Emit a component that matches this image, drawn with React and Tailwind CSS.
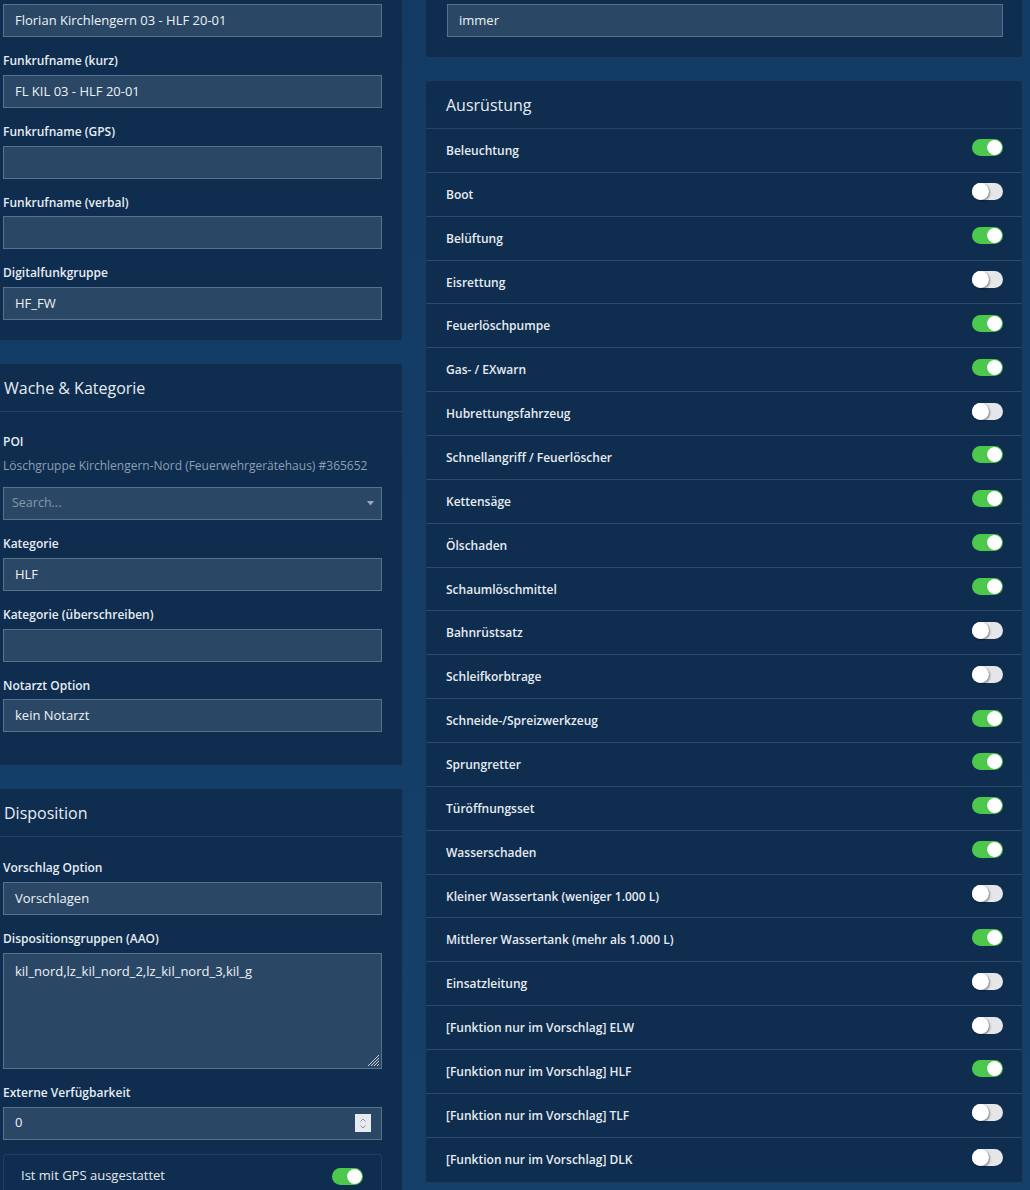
import React from "react";

function Toggle({ on }) {
  return on ? (
    <div className="relative h-[17px] w-[31px] shrink-0 rounded-full bg-[#4cc84c]">
      <div className="absolute right-[1px] top-[1px] h-[15px] w-[15px] rounded-full bg-white shadow-[0_0_1px_rgba(0,0,0,0.3)]" />
    </div>
  ) : (
    <div className="relative h-[17px] w-[31px] shrink-0 rounded-full bg-[#e4e6ea]">
      <div className="absolute left-0 top-0 h-[17px] w-[17px] rounded-full bg-white shadow-[1px_1px_2px_rgba(0,0,0,0.45)]" />
    </div>
  );
}

function Label({ children }) {
  return (
    <div className="mb-[4.75px] text-[12px] font-semibold leading-[18px] text-[#e6ecf2]">
      {children}
    </div>
  );
}

function Input({ value }) {
  return (
    <div className="flex h-[33px] items-center border border-[#57728e] bg-[#2a4866] px-[11px] text-[13px] text-[#eef2f6]">
      {value}
    </div>
  );
}

function Field({ label, value }) {
  return (
    <div className="pt-[15px]">
      <Label>{label}</Label>
      <Input value={value} />
    </div>
  );
}

function PanelHeader({ children }) {
  return (
    <div className="flex h-[48px] items-center border-b border-[#254568] pl-[21px] text-[16px] text-[#e6ecf2]">
      {children}
    </div>
  );
}

const rows = [
  ["Beleuchtung", true],
  ["Boot", false],
  ["Belüftung", true],
  ["Eisrettung", false],
  ["Feuerlöschpumpe", true],
  ["Gas- / EXwarn", true],
  ["Hubrettungsfahrzeug", false],
  ["Schnellangriff / Feuerlöscher", true],
  ["Kettensäge", true],
  ["Ölschaden", true],
  ["Schaumlöschmittel", true],
  ["Bahnrüstsatz", false],
  ["Schleifkorbtrage", false],
  ["Schneide-/Spreizwerkzeug", true],
  ["Sprungretter", true],
  ["Türöffnungsset", true],
  ["Wasserschaden", true],
  ["Kleiner Wassertank (weniger 1.000 L)", false],
  ["Mittlerer Wassertank (mehr als 1.000 L)", true],
  ["Einsatzleitung", false],
  ["[Funktion nur im Vorschlag] ELW", false],
  ["[Funktion nur im Vorschlag] HLF", true],
  ["[Funktion nur im Vorschlag] TLF", false],
  ["[Funktion nur im Vorschlag] DLK", false],
];

export default function App() {
  return (
    <div className="h-[1190px] w-[1030px] overflow-hidden bg-gradient-to-b from-[#123b63] to-[#14406a] font-['Open_Sans',sans-serif]">
      <div className="flex gap-[22px]">
        {/* Left column */}
        <div className="ml-[-18px] flex w-[421px] shrink-0 flex-col gap-[22px]">
          {/* Panel 1 */}
          <div className="rounded-b-[3px] border border-t-0 border-[#1b3a5c] bg-[#0f2d4f] pb-[20px] pl-[20px] pr-[20px] pt-[4px]">
            <Input value="Florian Kirchlengern 03 - HLF 20-01" />
            <Field label="Funkrufname (kurz)" value="FL KIL 03 - HLF 20-01" />
            <Field label="Funkrufname (GPS)" value="" />
            <Field label="Funkrufname (verbal)" value="" />
            <Field label="Digitalfunkgruppe" value="HF_FW" />
          </div>

          {/* Panel 2 */}
          <div className="rounded-[3px] border border-[#1b3a5c] bg-[#0f2d4f]">
            <PanelHeader>Wache &amp; Kategorie</PanelHeader>
            <div className="pb-[33px] pl-[20px] pr-[20px] pt-[21px]">
              <div className="text-[12px] font-semibold leading-[18px] text-[#e6ecf2]">POI</div>
              <div className="mt-[6px] whitespace-nowrap text-[12px] leading-[18px] text-[#8d9fb2]">
                Löschgruppe Kirchlengern-Nord (Feuerwehrgerätehaus) #365652
              </div>
              <div className="mt-[12px] flex h-[33px] items-center justify-between border border-[#57728e] bg-[#2a4866] pl-[8px] pr-[7px] text-[12.5px] text-[#8598ad]">
                <span>Search...</span>
                <svg width="7" height="5" viewBox="0 0 7 5">
                  <path d="M0 0 L7 0 L3.5 4.5 Z" fill="#9aabbc" />
                </svg>
              </div>
              <Field label="Kategorie" value="HLF" />
              <Field label="Kategorie (überschreiben)" value="" />
              <Field label="Notarzt Option" value="kein Notarzt" />
            </div>
          </div>

          {/* Panel 3 */}
          <div className="rounded-[3px] border border-[#1b3a5c] bg-[#0f2d4f]">
            <PanelHeader>Disposition</PanelHeader>
            <div className="pl-[20px] pr-[20px] pt-[7px]">
              <Field label="Vorschlag Option" value="Vorschlagen" />
              <div className="pt-[15px]">
                <Label>Dispositionsgruppen (AAO)</Label>
                <div className="relative h-[116px] border border-[#57728e] bg-[#2a4866] px-[11px] pt-[7px] text-[13px] leading-[20px] text-[#eef2f6]">
                  kil_nord,lz_kil_nord_2,lz_kil_nord_3,kil_g
                  <svg className="absolute bottom-[1px] right-[1px]" width="14" height="14" viewBox="0 0 14 14">
                    <path d="M13 2 L2 13 M13 5 L5 13 M13 8 L8 13 M13 11 L11 13" stroke="#c8d2dc" strokeWidth="1" />
                  </svg>
                </div>
              </div>
              <div className="pt-[15px]">
                <Label>Externe Verfügbarkeit</Label>
                <div className="flex h-[33px] items-center justify-between border border-[#57728e] bg-[#2a4866] pl-[11px] pr-[10px] text-[13px] text-[#eef2f6]">
                  <span>0</span>
                  <div className="flex h-[18px] w-[16px] flex-col items-center justify-center bg-[#e7eaee]">
                    <svg width="8" height="13" viewBox="0 0 8 13">
                      <path d="M1.5 4.5 L4 2 L6.5 4.5" stroke="#8a939c" strokeWidth="1" fill="none" />
                      <path d="M1.5 8.5 L4 11 L6.5 8.5" stroke="#8a939c" strokeWidth="1" fill="none" />
                    </svg>
                  </div>
                </div>
              </div>
              <div className="mt-[14px] flex h-[44px] items-center justify-between rounded-t-[3px] border border-b-0 border-[#1f3e61] pl-[17px] pr-[18px]">
                <span className="text-[13px] text-[#e2e8ee]">Ist mit GPS ausgestattet</span>
                <Toggle on={true} />
              </div>
            </div>
          </div>
        </div>

        {/* Right column */}
        <div className="flex w-[598px] shrink-0 flex-col gap-[22px]">
          <div className="rounded-b-[3px] border border-t-0 border-[#1b3a5c] bg-[#0f2d4f] pb-[20px] pl-[21px] pr-[19px] pt-[4px]">
            <Input value="immer" />
          </div>

          <div className="rounded-[3px] border border-[#1b3a5c] bg-[#0f2d4f]">
            <div className="flex h-[48px] items-center border-b border-[#254568] pl-[20px] text-[16px] text-[#e6ecf2]">
              Ausrüstung
            </div>
            {rows.map(([name, on], i) => (
              <div
                key={name}
                className={
                  i === rows.length - 1
                    ? "flex h-[43.87px] items-center justify-between pl-[20px] pr-[19px]"
                    : "flex h-[43.87px] items-center justify-between border-b border-[#2c4b6c] pl-[20px] pr-[19px]"
                }
              >
                <span className="pt-[1px] text-[12px] font-semibold text-[#e6ecf2]">{name}</span>
                <div className="mb-[5px]">
                  <Toggle on={on} />
                </div>
              </div>
            ))}
          </div>
        </div>
      </div>
    </div>
  );
}
